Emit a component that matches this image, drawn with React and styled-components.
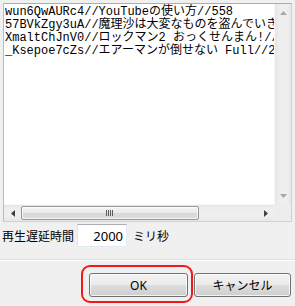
import React from 'react';
import styled, { createGlobalStyle } from 'styled-components';

const GlobalStyle = createGlobalStyle`
  html, body {
    margin: 0;
    padding: 0;
    background: #f0f0f0;
    overflow: hidden;
  }
`;

const UI_FONT = `"Noto Sans", "Noto Sans CJK JP", sans-serif`;

const Window = styled.div`
  width: 295px;
  height: 306px;
  display: flex;
  flex-direction: column;
  background: #f0f0f0;
  font-family: ${UI_FONT};
  font-size: 12px;
  color: #000;
`;

const TextBox = styled.div`
  margin: 3px 0 0 3px;
  width: 289px;
  height: 219px;
  box-sizing: border-box;
  border: 1px solid #c6d3e1;
  border-top-color: #abadb3;
  border-left-color: #b6bcc6;
  background: #fff;
  display: grid;
  grid-template-columns: 1fr 17px;
  grid-template-rows: 1fr 17px;
`;

const Content = styled.div`
  padding: 2px 0 0 1px;
  overflow: hidden;
  font-family: "Liberation Mono", "Noto Sans CJK JP", monospace;
  font-size: 12px;
`;

const Line = styled.div`
  height: 13px;
  line-height: 13px;
  white-space: pre;
`;

const VScroll = styled.div`
  display: flex;
  flex-direction: column;
  justify-content: space-between;
  background: linear-gradient(to right, #e6e6e6, #efefef 30%, #efefef 70%, #e8e8e8);
  border-left: 1px solid #f7f7f7;
`;

const HScroll = styled.div`
  display: flex;
  align-items: stretch;
  background: linear-gradient(to bottom, #e6e6e6, #efefef 30%, #efefef 70%, #e8e8e8);
  border-top: 1px solid #f7f7f7;
`;

const Corner = styled.div`
  background: #ededed;
`;

const ArrowButton = styled.div`
  width: ${({ horizontal }) => (horizontal ? '17px' : 'auto')};
  height: ${({ horizontal }) => (horizontal ? 'auto' : '17px')};
  display: flex;
  align-items: center;
  justify-content: center;
  flex-shrink: 0;
`;

const Thumb = styled.div`
  width: 178px;
  margin: 1px 0 1px 0;
  box-sizing: border-box;
  border: 1px solid #979797;
  border-radius: 2px;
  background: linear-gradient(to bottom, #f4f4f4, #e9e9e9 50%, #d8d8d8 51%, #dcdcdc);
  box-shadow: inset 0 0 0 1px rgba(255, 255, 255, 0.7);
  display: flex;
  align-items: center;
  justify-content: center;
`;

const Spacer = styled.div`
  flex: 1;
`;

const DelayRow = styled.div`
  display: flex;
  align-items: center;
  margin: 2px 0 0 2px;
  height: 23px;
`;

const Label = styled.span`
  font-family: "Noto Sans CJK JP", sans-serif;
  font-size: 12px;
  white-space: nowrap;
`;

const NumberBox = styled.div`
  width: 50px;
  height: 23px;
  box-sizing: border-box;
  margin: 0 6px 0 3px;
  border: 1px solid #e3e9ef;
  border-top-color: #abadb3;
  border-left-color: #e2e3ea;
  background: #fff;
  display: flex;
  align-items: center;
  justify-content: flex-end;
  padding-right: 3px;
  font-family: "Noto Sans", sans-serif;
  font-size: 13px;
`;

const Separator = styled.div`
  margin-top: 12px;
  border-top: 1px solid #dfdfdf;
  border-bottom: 1px solid #ffffff;
`;

const ButtonRow = styled.div`
  display: flex;
  justify-content: flex-end;
  gap: 6px;
  margin-top: 12px;
  padding-right: 4px;
`;

const Button = styled.div`
  position: relative;
  width: ${({ width }) => width}px;
  height: 24px;
  box-sizing: border-box;
  border: 1px solid #707070;
  border-radius: 3px;
  background: linear-gradient(to bottom, #f2f2f2, #ebebeb 50%, #dddddd 51%, #cfcfcf);
  box-shadow: inset 0 0 0 1px rgba(255, 255, 255, 0.75);
  display: flex;
  align-items: center;
  justify-content: center;
  font-family: "Noto Sans", "Noto Sans CJK JP", sans-serif;
  font-size: 12px;

  ${({ highlighted }) =>
    highlighted &&
    `
    &::after {
      content: '';
      position: absolute;
      left: -9px;
      top: -9px;
      right: -6px;
      bottom: -7px;
      border: 2px solid #f01818;
      border-radius: 9px;
    }
  `}
`;

const Arrow = ({ dir, color }) => {
  const shapes = {
    up: { w: 7, h: 4, points: '0,4 3.5,0 7,4' },
    down: { w: 7, h: 4, points: '0,0 3.5,4 7,0' },
    left: { w: 4, h: 7, points: '4,0 0,3.5 4,7' },
    right: { w: 4, h: 7, points: '0,0 4,3.5 0,7' },
  };
  const s = shapes[dir];
  return (
    <svg width={s.w} height={s.h} viewBox={`0 0 ${s.w} ${s.h}`}>
      <polygon points={s.points} fill={color} />
    </svg>
  );
};

const Grip = () => (
  <svg width="8" height="6" viewBox="0 0 8 6">
    {[0, 2, 4, 6].map((x) => (
      <rect key={x} x={x} y="0" width="1" height="6" fill="#5a5a5a" />
    ))}
  </svg>
);

const lines = [
  'wun6QwAURc4//YouTubeの使い方//558',
  '57BVkZgy3uA//魔理沙は大変なものを盗んでいきました',
  'XmaltChJnV0//ロックマン2 おっくせんまん!//1',
  '_Ksepoe7cZs//エアーマンが倒せない Full//225',
];

export default function App() {
  return (
    <>
      <GlobalStyle />
      <Window>
        <TextBox>
          <Content>
            {lines.map((l) => (
              <Line key={l}>{l}</Line>
            ))}
          </Content>
          <VScroll>
            <ArrowButton>
              <Arrow dir="up" color="#a8a8a8" />
            </ArrowButton>
            <ArrowButton>
              <Arrow dir="down" color="#a8a8a8" />
            </ArrowButton>
          </VScroll>
          <HScroll>
            <ArrowButton horizontal>
              <Arrow dir="left" color="#404040" />
            </ArrowButton>
            <Thumb>
              <Grip />
            </Thumb>
            <Spacer />
            <ArrowButton horizontal>
              <Arrow dir="right" color="#404040" />
            </ArrowButton>
          </HScroll>
          <Corner />
        </TextBox>

        <DelayRow>
          <Label>再生遅延時間</Label>
          <NumberBox>2000</NumberBox>
          <Label>ミリ秒</Label>
        </DelayRow>

        <Separator />

        <ButtonRow>
          <Button width={99} highlighted>OK</Button>
          <Button width={97}>キャンセル</Button>
        </ButtonRow>
      </Window>
    </>
  );
}
